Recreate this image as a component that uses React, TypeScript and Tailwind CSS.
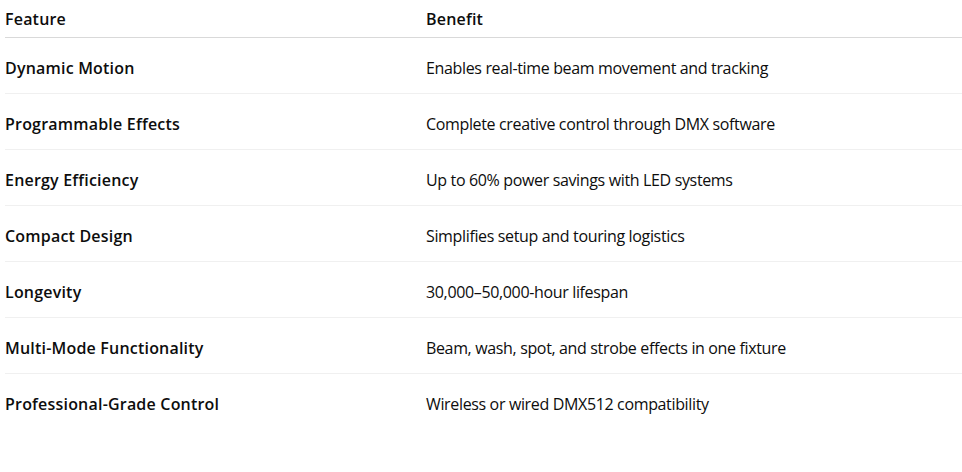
const rows = [
  ['Dynamic Motion', 'Enables real-time beam movement and tracking'],
  ['Programmable Effects', 'Complete creative control through DMX software'],
  ['Energy Efficiency', 'Up to 60% power savings with LED systems'],
  ['Compact Design', 'Simplifies setup and touring logistics'],
  ['Longevity', '30,000–50,000-hour lifespan'],
  ['Multi-Mode Functionality', 'Beam, wash, spot, and strobe effects in one fixture'],
  ['Professional-Grade Control', 'Wireless or wired DMX512 compatibility'],
];

export default function App() {
  return (
    <div className="min-h-screen bg-white pl-[5px] text-[16px] text-[#0d0d0d] [font-family:'Open_Sans',sans-serif]">
      <div className="grid grid-cols-[421px_1fr] h-[38px] items-center border-b border-[#d9d9d9] font-semibold tracking-[0.2px]">
        <div>Feature</div>
        <div>Benefit</div>
      </div>
      {rows.map(([feature, benefit], i) => (
        <div
          key={feature}
          className={`grid grid-cols-[421px_1fr] h-[56px] items-center pt-[4px] ${i < rows.length - 1 ? 'border-b border-[#f0f0f0]' : ''}`}
        >
          <div className="font-semibold tracking-[0.2px]">{feature}</div>
          <div className="tracking-[-0.35px]">{benefit}</div>
        </div>
      ))}
    </div>
  );
}
